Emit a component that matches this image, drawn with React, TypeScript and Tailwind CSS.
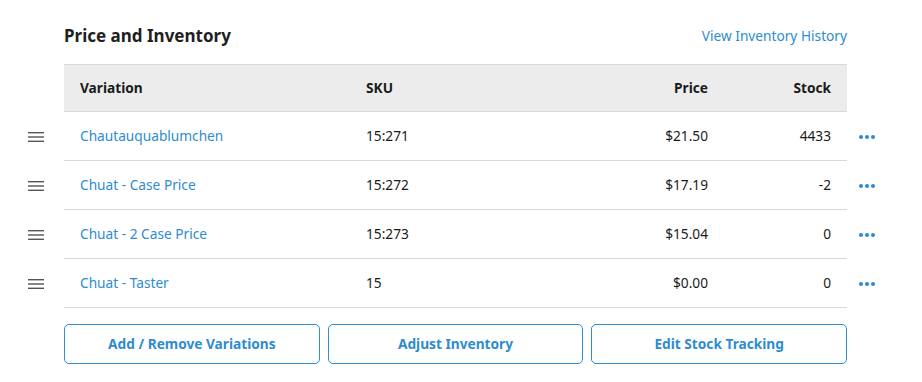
const ROWS = [
  { name: "Chautauquablumchen", sku: "15:271", price: "$21.50", stock: "4433" },
  { name: "Chuat - Case Price", sku: "15:272", price: "$17.19", stock: "-2" },
  { name: "Chuat - 2 Case Price", sku: "15:273", price: "$15.04", stock: "0" },
  { name: "Chuat - Taster", sku: "15", price: "$0.00", stock: "0" },
];

const Grip = () => (
  <div className="flex w-16 items-center pl-7">
    <svg width="16" height="10" viewBox="0 0 16 10" className="text-[#555]">
      <rect x="0" y="0" width="16" height="1.4" fill="currentColor" />
      <rect x="0" y="4.3" width="16" height="1.4" fill="currentColor" />
      <rect x="0" y="8.6" width="16" height="1.4" fill="currentColor" />
    </svg>
  </div>
);

const Dots = () => (
  <div className="flex items-center gap-[2px] pl-3">
    <span className="h-1 w-1 rounded-full bg-[#2b8cd3]" />
    <span className="h-1 w-1 rounded-full bg-[#2b8cd3]" />
    <span className="h-1 w-1 rounded-full bg-[#2b8cd3]" />
  </div>
);

export default function App() {
  return (
    <div
      className="h-[382px] w-[922px] bg-white text-[13.7px] text-[#1a1a1a]"
      style={{ fontFamily: '"Noto Sans", "Open Sans", sans-serif' }}
    >
      {/* Title bar */}
      <div className="flex w-[847px] items-end justify-between pl-16 pt-[23px]">
        <h2 className="text-[17px] font-bold leading-[26px] text-[#1f1f1f]">Price and Inventory</h2>
        <a className="pb-[2px] text-[#2e8ccf]">View Inventory History</a>
      </div>

      {/* Table */}
      <div className="mt-[15px]">
        <div className="flex">
          <div className="w-16" />
          <div className="grid h-[48px] w-[783px] grid-cols-[286px_200px_174px_123px] items-center border-y border-[#d9d9d9] bg-[#ebeceb] font-bold">
            <div className="pl-4">Variation</div>
            <div className="pl-4">SKU</div>
            <div className="pr-4 text-right">Price</div>
            <div className="pr-4 text-right">Stock</div>
          </div>
        </div>

        {ROWS.map((row) => (
          <div key={row.name} className="flex">
            <Grip />
            <div className="grid h-[49px] w-[783px] grid-cols-[286px_200px_174px_123px] items-center border-b border-[#d9d9d9]">
              <div className="pl-4 text-[#2e8ccf]">{row.name}</div>
              <div className="pl-4">{row.sku}</div>
              <div className="pr-4 text-right">{row.price}</div>
              <div className="pr-4 text-right">{row.stock}</div>
            </div>
            <Dots />
          </div>
        ))}
      </div>

      {/* Actions */}
      <div className="mt-4 grid w-[847px] grid-cols-3 gap-2 pl-16">
        {["Add / Remove Variations", "Adjust Inventory", "Edit Stock Tracking"].map((label) => (
          <button
            key={label}
            className="h-10 rounded-[5px] border border-[#2e8ccf] bg-white font-bold text-[#2e8ccf]"
          >
            {label}
          </button>
        ))}
      </div>
    </div>
  );
}
